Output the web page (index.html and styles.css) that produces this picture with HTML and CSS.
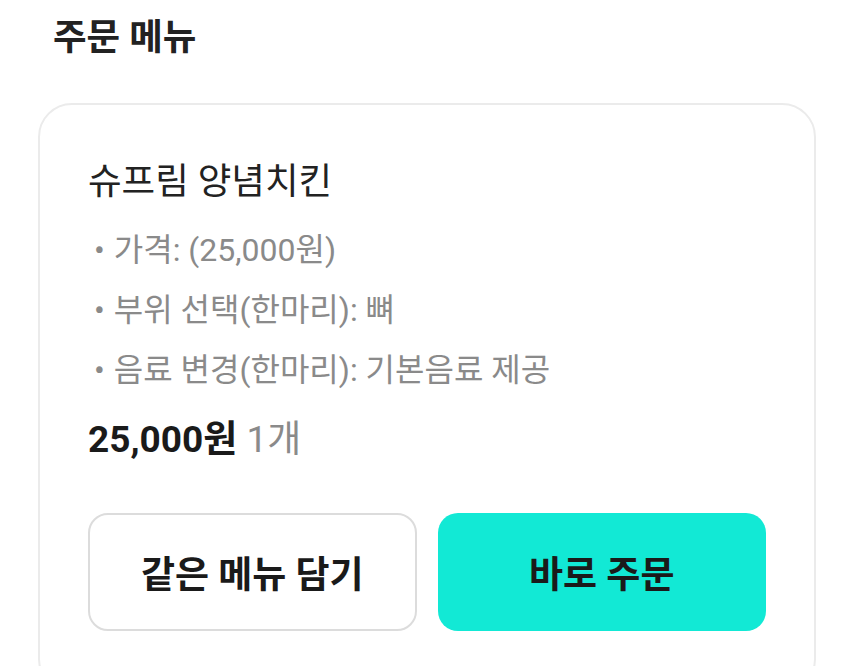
FILE: index.html
```html
<!DOCTYPE html>
<html lang="ko">
<head>
<meta charset="utf-8">
<link rel="stylesheet" href="styles.css">
</head>
<body>
<div class="page">
  <h2 class="section-title">주문 메뉴</h2>
  <div class="card">
    <div class="name">슈프림 양념치킨</div>
    <ul class="options">
      <li>가격: (25,000원)</li>
      <li>부위 선택(한마리): 뼈</li>
      <li>음료 변경(한마리): 기본음료 제공</li>
    </ul>
    <div class="price"><strong>25,000원</strong> <span class="qty">1개</span></div>
    <div class="actions">
      <button class="btn btn-outline">같은 메뉴 담기</button>
      <button class="btn btn-primary">바로 주문</button>
    </div>
  </div>
</div>
</body>
</html>
```

FILE: styles.css
```css
* { box-sizing: border-box; }
html, body { margin: 0; padding: 0; background: #fff; }
body {
  font-family: "Roboto", "Noto Sans CJK KR", sans-serif;
  color: #1e1e1e;
}
.page {
  padding: 12px 34px 0 38px;
}
.section-title {
  margin: 0 0 0 15px;
  font-size: 36.5px;
  font-weight: 700;
  line-height: 52px;
  color: #222;
}
.card {
  margin-top: 39px;
  width: 778px;
  border: 2px solid #ebebeb;
  border-radius: 34px;
  padding: 51px 48px 60px 48px;
}
.name {
  font-size: 36.5px;
  line-height: 52px;
  color: #222;
}
.options {
  list-style: none;
  margin: 12px 0 0 0;
  padding: 0;
}
.options li {
  font-size: 32px;
  line-height: 60px;
  color: #8a8a8a;
}
.options li::before {
  content: "•";
  margin: 0 9px 0 6px;
}
.price {
  margin-top: 14px;
  font-size: 37px;
  line-height: 52px;
}
.price strong { font-weight: 700; color: #1a1a1a; }
.qty { color: #8a8a8a; }
.actions {
  display: grid;
  grid-template-columns: 1fr 1fr;
  gap: 21px;
  margin-top: 47px;
}
.btn {
  height: 118px;
  border-radius: 20px;
  font-family: "Roboto", "Noto Sans CJK KR", sans-serif;
  font-size: 37px;
  font-weight: 700;
  color: #1a1a1a;
  cursor: pointer;
}
.btn-outline {
  background: #fff;
  border: 2px solid #dcdcdc;
}
.btn-primary {
  background: #12e9d5;
  border: none;
}
```
